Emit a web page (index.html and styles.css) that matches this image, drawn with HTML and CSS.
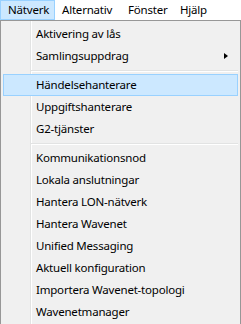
FILE: index.html
```html
<!DOCTYPE html>
<html lang="sv">
<head>
    <meta charset="UTF-8">
    <title>Nätverk</title>
    <link rel="stylesheet" href="styles.css">
</head>
<body>

<!-- Menu bar -->
<div class="menubar">
    <div class="menubar-item item-natverk active">Nätverk</div>
    <div class="menubar-item item-alternativ">Alternativ</div>
    <div class="menubar-item item-fonster">Fönster</div>
    <div class="menubar-item">Hjälp</div>
</div>

<!-- Dropdown -->
<div class="menu">
    <div class="menu-item">Aktivering av lås</div>
    <div class="menu-item has-sub">Samlingsuppdrag <span class="sub-arrow"></span></div>
    <div class="menu-sep"></div>
    <div class="menu-item hover">Händelsehanterare</div>
    <div class="menu-item">Uppgiftshanterare</div>
    <div class="menu-item">G2-tjänster</div>
    <div class="menu-sep"></div>
    <div class="menu-item">Kommunikationsnod</div>
    <div class="menu-item">Lokala anslutningar</div>
    <div class="menu-item">Hantera LON-nätverk</div>
    <div class="menu-item">Hantera Wavenet</div>
    <div class="menu-item">Unified Messaging</div>
    <div class="menu-item">Aktuell konfiguration</div>
    <div class="menu-item">Importera Wavenet-topologi</div>
    <div class="menu-item">Wavenetmanager</div>
</div>

</body>
</html>
```

FILE: styles.css
```css
body {
    margin: 0;
    background-color: #ffffff;
    font-family: "Noto Sans", "Open Sans", sans-serif;
    font-size: 11.5px;
    letter-spacing: -0.2px;
    color: #000000;
}

.menubar {
    display: flex;
    height: 20px;
    background-color: #ffffff;
}

.menubar-item {
    padding: 0 6px;
    line-height: 18px;
    border: 1px solid transparent;
    box-sizing: border-box;
}

.item-natverk {
    width: 55px;
    padding-left: 7px;
}

.item-alternativ {
    width: 66px;
}

.item-fonster {
    width: 52px;
}

.menubar-item.active {
    background-color: #cce8ff;
    border-color: #99d1ff;
}

.menu {
    width: 241px;
    box-sizing: border-box;
    border: 1px solid #979797;
    padding: 2px;
    background-color: #f0f0f0;
    /* icon column divider */
    background-image: linear-gradient(to right,
        transparent 29px, #e2e3e3 29px, #e2e3e3 30px,
        #ffffff 30px, #ffffff 31px, transparent 31px);
}

.menu-item {
    position: relative;
    height: 22px;
    padding-left: 32px;
    box-sizing: border-box;
    border: 1px solid transparent;
    line-height: 20px;
}

.menu-item.hover {
    background-color: #cce8ff;
    border-color: #99d1ff;
}

.sub-arrow {
    position: absolute;
    right: 9px;
    top: 7px;
    width: 0;
    height: 0;
    border-top: 3.5px solid transparent;
    border-bottom: 3.5px solid transparent;
    border-left: 4px solid #000000;
}

.menu-sep {
    height: 7px;
    margin-left: 28px;
    background-image: linear-gradient(to bottom,
        transparent 3px, #e2e3e3 3px, #e2e3e3 4px,
        #ffffff 4px, #ffffff 5px, transparent 5px);
}
```
